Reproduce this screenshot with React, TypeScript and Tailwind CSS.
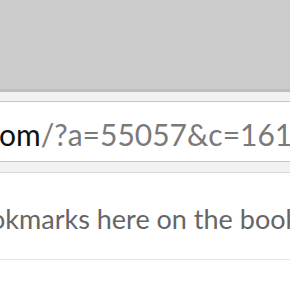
export default function App() {
  return (
    <div className="w-[290px] h-[290px] overflow-hidden bg-white font-['Lato','Open_Sans',sans-serif]">
      <div className="h-[89px] bg-[#cccccc]" />
      <div className="h-[3px] bg-[#bdbdbd]" />
      <div className="h-[9px] bg-[#f2f2f2]" />
      <div className="h-[61px] border-y border-[#c6c6c6] bg-white overflow-hidden flex items-center">
        <div className="whitespace-nowrap text-[30px] leading-none text-[#7a7a7a] ml-[-1px] mt-[4px]">
          <span className="text-[#111111]">om</span>/?a=55057&amp;c=161
        </div>
      </div>
      <div className="h-[11px] bg-[#f2f2f2] border-b border-[#d6d6d6]" />
      <div className="h-[87px] flex items-center overflow-hidden border-b border-[#e6e6e6]">
        <div className="whitespace-nowrap text-[27px] leading-none text-[#666666] ml-[-10px] mt-[4px]">
          okmarks here on the bookmarks bar
        </div>
      </div>
    </div>
  );
}
